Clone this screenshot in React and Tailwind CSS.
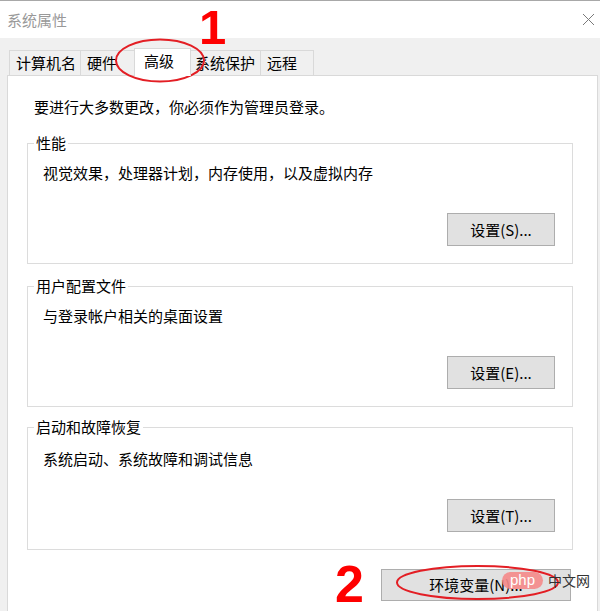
import React from 'react';

const FONT = "font-['Microsoft_YaHei_UI','Noto_Sans_CJK_SC',sans-serif]";

const tabs = [
    { label: '计算机名', w: 'w-[72px]' },
    { label: '硬件', w: 'w-[56px]' },
    { label: '高级', w: 'w-[57px]', active: true },
    { label: '系统保护', w: 'w-[73px]' },
    { label: '远程', w: 'w-[54px]' },
];

// Dialog style push button
const Button = ({ children, className = '' }) => (
    <button className={`bg-[#e1e1e1] border border-[#adadad] text-[15px] leading-[20px] text-black ${className}`}>
        {children}
    </button>
);

// Windows group box with the caption sitting on the top border
const Group = ({ title, text, button, tall }) => (
    <div className={`border border-[#dcdcdc] flex flex-col ${tall ? 'h-[123px]' : 'h-[121px]'}`}>
        <span className="-mt-[11px] ml-[6px] px-[2px] w-fit bg-white leading-[20px] text-black">{title}</span>
        <div className={`${tall ? 'mt-[12px]' : 'mt-[10px]'} pl-[15px] leading-[20px] text-black`}>{text}</div>
        <Button className="self-end mr-[17px] mt-[30px] w-[108px] h-[33px]">{button}</Button>
    </div>
);

const App = () => {
    return (
        <div className={`relative w-[600px] h-[611px] overflow-hidden bg-[#f0f0f0] flex flex-col text-[15px] ${FONT}`}>
            {/* title bar */}
            <div className="h-[38px] shrink-0 bg-white border-t border-[#a8a8a8] flex items-center justify-between pl-[7px] pr-[5px]">
                <span className="text-[#999] leading-[20px]">系统属性</span>
                <svg width="13" height="13" viewBox="0 0 13 13" className="mr-[0px]">
                    <path d="M1 1 L12 12 M12 1 L1 12" stroke="#7a7a7a" strokeWidth="1" fill="none" />
                </svg>
            </div>

            {/* tabs */}
            <div className="pt-[10px] pl-[9px] h-[37px] shrink-0 flex items-end">
                {tabs.map((t, i) =>
                    t.active ? (
                        <div
                            key={t.label}
                            className={`relative z-10 -mx-[2px] -mb-px h-[28px] ${t.w} bg-white border border-b-0 border-[#d9d9d9] pl-[9px] pt-[2px] leading-[20px] text-black`}
                        >
                            {t.label}
                        </div>
                    ) : (
                        <div
                            key={t.label}
                            className={`h-[25px] ${t.w} ${i > 0 ? '-ml-px' : ''} border border-b-0 border-[#d9d9d9] pl-[6px] pt-[2px] leading-[20px] text-black`}
                        >
                            {t.label}
                        </div>
                    )
                )}
            </div>

            {/* tab page */}
            <div className="ml-[7px] mr-[2px] h-[560px] shrink-0 bg-white border border-[#d9d9d9] pt-[21px] pl-[19px] pr-[24px] flex flex-col">
                <div className="ml-[7px] leading-[20px] text-black">要进行大多数更改，你必须作为管理员登录。</div>
                <div className="mt-[26px] flex flex-col">
                    <Group title="性能" text="视觉效果，处理器计划，内存使用，以及虚拟内存" button="设置(S)..." />
                    <div className="mt-[22px]">
                        <Group title="用户配置文件" text="与登录帐户相关的桌面设置" button="设置(E)..." />
                    </div>
                    <div className="mt-[20px]">
                        <Group title="启动和故障恢复" text="系统启动、系统故障和调试信息" button="设置(T)..." tall />
                    </div>
                </div>
                <Button className="self-end mr-[2px] mt-[19px] w-[190px] h-[32px]">环境变量(N)...</Button>
            </div>

            {/* annotations */}
            <span className="absolute left-[199px] top-[3px] text-[49px] leading-none font-bold text-[#fe0000] font-['Liberation_Sans',sans-serif]">1</span>
            <span className="absolute left-[335px] top-[558px] text-[52px] leading-none font-bold text-[#fe0000] font-['Liberation_Sans',sans-serif]">2</span>
            <svg className="absolute left-0 top-0 pointer-events-none" width="600" height="611">
                <ellipse cx="160" cy="60.5" rx="44" ry="21" fill="none" stroke="#e31e24" strokeWidth="2" />
                <ellipse cx="477.5" cy="582.5" rx="80.5" ry="16.5" fill="none" stroke="#e31e24" strokeWidth="2" />
            </svg>

            {/* watermark */}
            <div className="absolute left-[502px] top-[572px] flex items-center gap-[5px]">
                <span className="h-[17px] w-[41px] rounded-full bg-[#f58a8a]/90 text-white text-[15px] leading-[15px] font-['Liberation_Sans',sans-serif] text-center">php</span>
                <span className="text-[#333] text-[14px] leading-[17px]">中文网</span>
            </div>
        </div>
    );
};

export default App;
